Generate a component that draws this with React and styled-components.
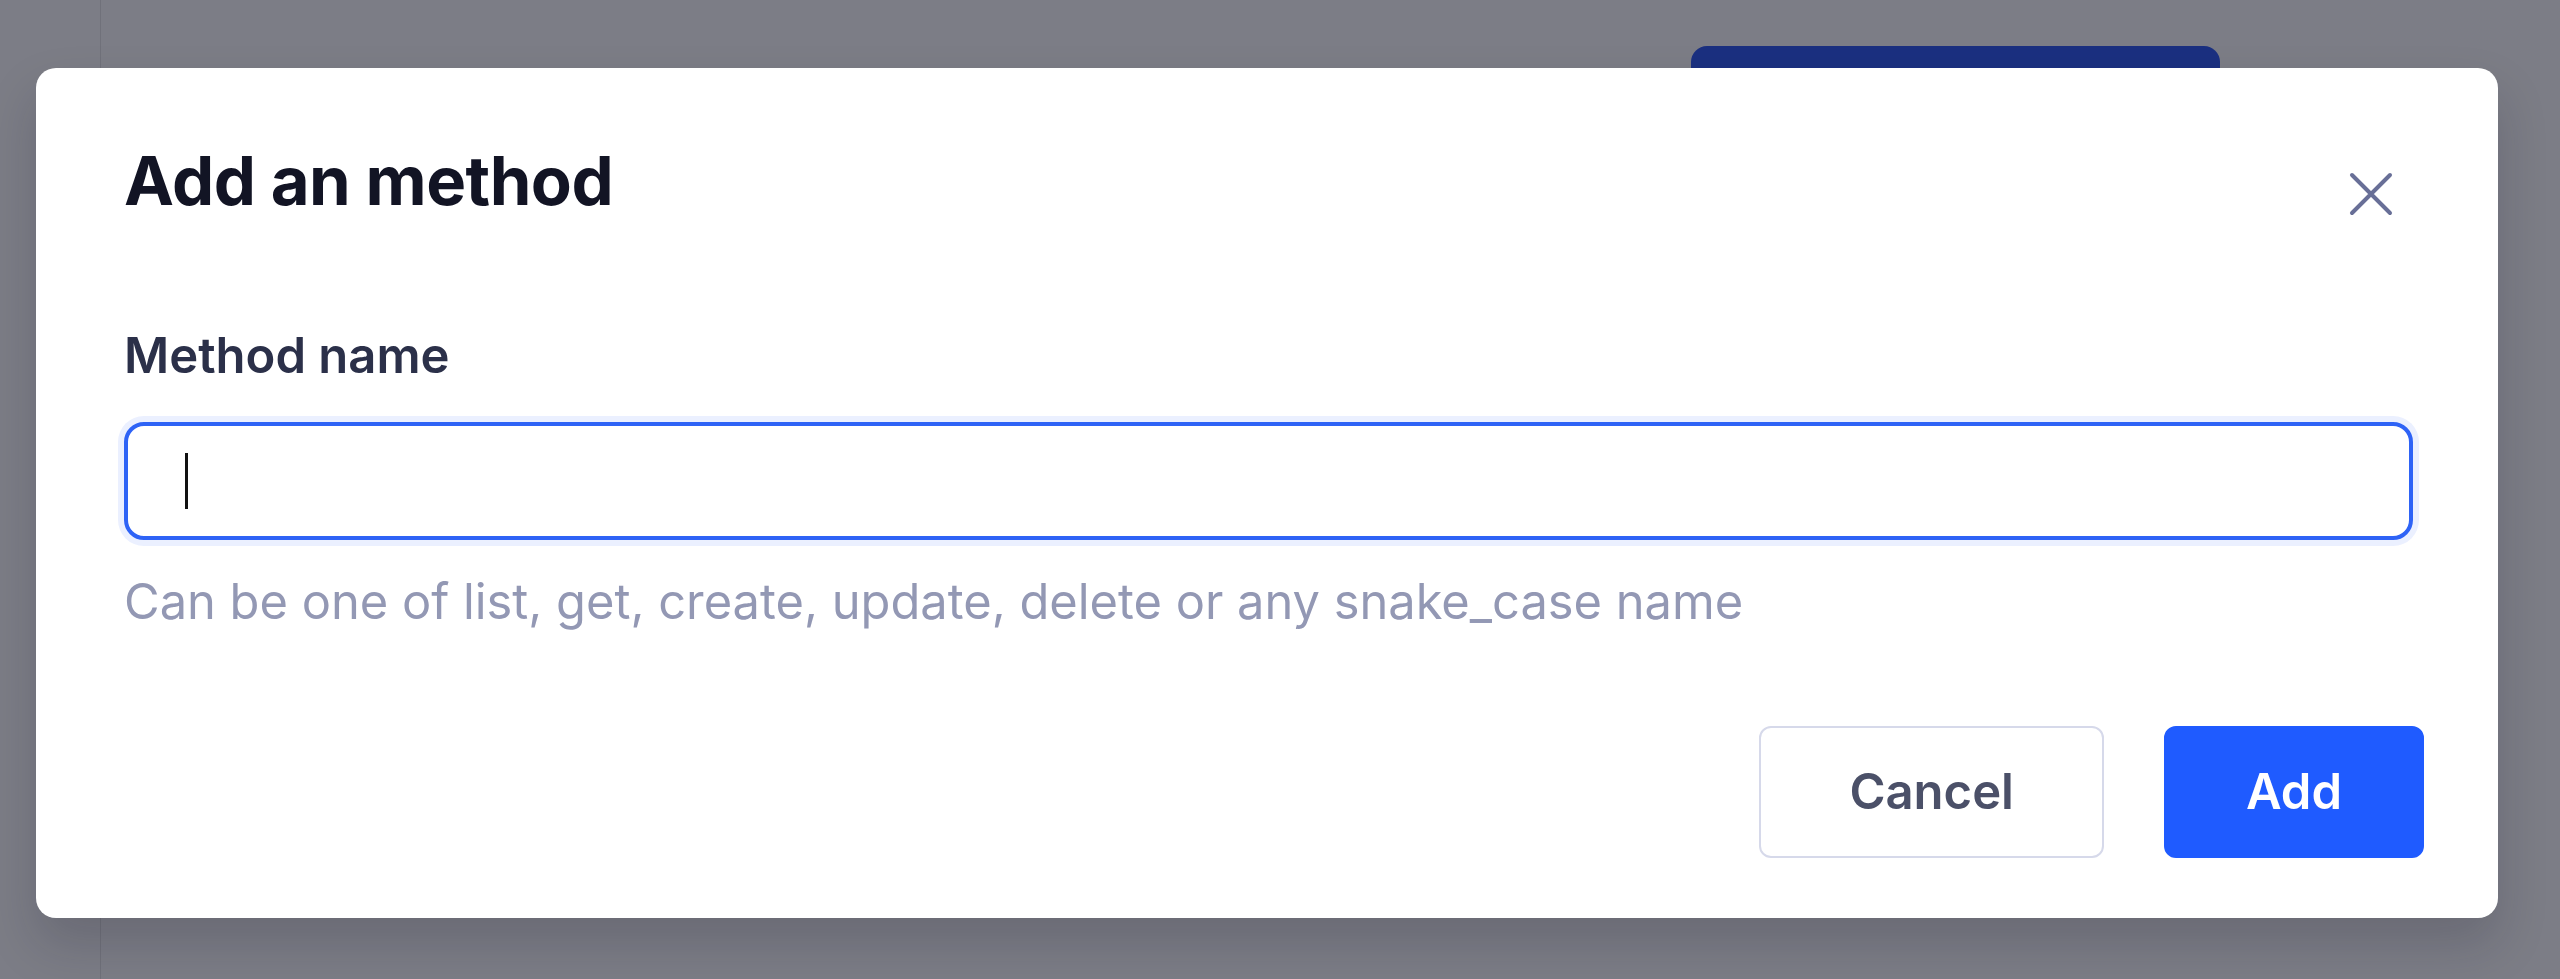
import styled, { createGlobalStyle } from "styled-components";

const GlobalStyle = createGlobalStyle`
  html, body {
    margin: 0;
    padding: 0;
    overflow: hidden;
  }
  body {
    font-family: Inter, "Noto Sans", "Liberation Sans", sans-serif;
  }
  * {
    box-sizing: border-box;
  }
`;

const Page = styled.div`
  position: relative;
  width: 100vw;
  height: 979px;
  display: grid;
  grid-template-columns: 101px 1fr;
  background: #7c7d86;
`;

const Sidebar = styled.aside`
  border-right: 1px solid #70717a;
`;

const Main = styled.main`
  padding-top: 46px;
`;

const Toolbar = styled.div`
  display: flex;
  justify-content: flex-end;
  padding-right: 340px;
`;

const GhostButton = styled.div`
  width: 529px;
  height: 90px;
  border-radius: 16px;
  background: #1b3080;
`;

const Overlay = styled.div`
  position: absolute;
  inset: 0;
  display: flex;
  align-items: flex-start;
  padding: 68px 62px 0 36px;
`;

const Modal = styled.div`
  flex: 1;
  background: #ffffff;
  border-radius: 20px;
  padding: 73px 85px 60px 88px;
  box-shadow: 0 26px 50px rgba(20, 20, 40, 0.18);
  display: flex;
  flex-direction: column;
`;

const Header = styled.div`
  display: flex;
  justify-content: space-between;
  align-items: flex-start;
`;

const Title = styled.h2`
  margin: 0;
  font-size: 67px;
  line-height: 1.2;
  font-weight: 700;
  letter-spacing: -0.008em;
  color: #121424;
`;

const CloseButton = styled.button`
  border: none;
  background: none;
  padding: 0;
  margin: 31px 20px 0 0;
  width: 44px;
  height: 44px;
  display: flex;
  color: #686f97;
`;

const Label = styled.label`
  margin-top: 106px;
  font-size: 49px;
  line-height: 1.2;
  font-weight: 600;
  color: #2b3049;
`;

const Field = styled.div`
  margin-top: 36px;
  height: 118px;
  border: 4px solid #2e63f6;
  border-radius: 20px;
  box-shadow: 0 0 0 6px #ebf0ff;
  display: flex;
  align-items: center;
  padding-left: 57px;
`;

const Caret = styled.span`
  width: 3px;
  height: 56px;
  background: #111111;
`;

const Hint = styled.p`
  margin: 33px 0 0;
  font-size: 48.8px;
  line-height: 1.2;
  font-weight: 400;
  color: #9398b4;
`;

const Footer = styled.div`
  margin: 94px -11px 0 0;
  display: flex;
  justify-content: flex-end;
  gap: 60px;
`;

const Button = styled.button`
  height: 132px;
  padding: 0 ${(p) => (p.$primary ? "80px" : "88px")};
  border-radius: 12px;
  border: 2px solid ${(p) => (p.$primary ? "#1f5bff" : "#d6d9ea")};
  background: ${(p) => (p.$primary ? "#1f5bff" : "#ffffff")};
  color: ${(p) => (p.$primary ? "#ffffff" : "#4b5068")};
  font-family: inherit;
  font-size: 49px;
  font-weight: 600;
`;

function CloseIcon() {
  return (
    <svg width="44" height="44" viewBox="0 0 44 44" fill="none">
      <path
        d="M3 3L41 41M41 3L3 41"
        stroke="currentColor"
        strokeWidth="4"
        strokeLinecap="round"
      />
    </svg>
  );
}

function AddMethodModal() {
  return (
    <Modal role="dialog">
      <Header>
        <Title>Add an method</Title>
        <CloseButton aria-label="Close">
          <CloseIcon />
        </CloseButton>
      </Header>
      <Label>Method name</Label>
      <Field>
        <Caret />
      </Field>
      <Hint>
        Can be one of list, get, create, update, delete or any snake_case name
      </Hint>
      <Footer>
        <Button>Cancel</Button>
        <Button $primary>Add</Button>
      </Footer>
    </Modal>
  );
}

export default function App() {
  return (
    <>
      <GlobalStyle />
      <Page>
        <Sidebar />
        <Main>
          <Toolbar>
            <GhostButton />
          </Toolbar>
        </Main>
        <Overlay>
          <AddMethodModal />
        </Overlay>
      </Page>
    </>
  );
}
